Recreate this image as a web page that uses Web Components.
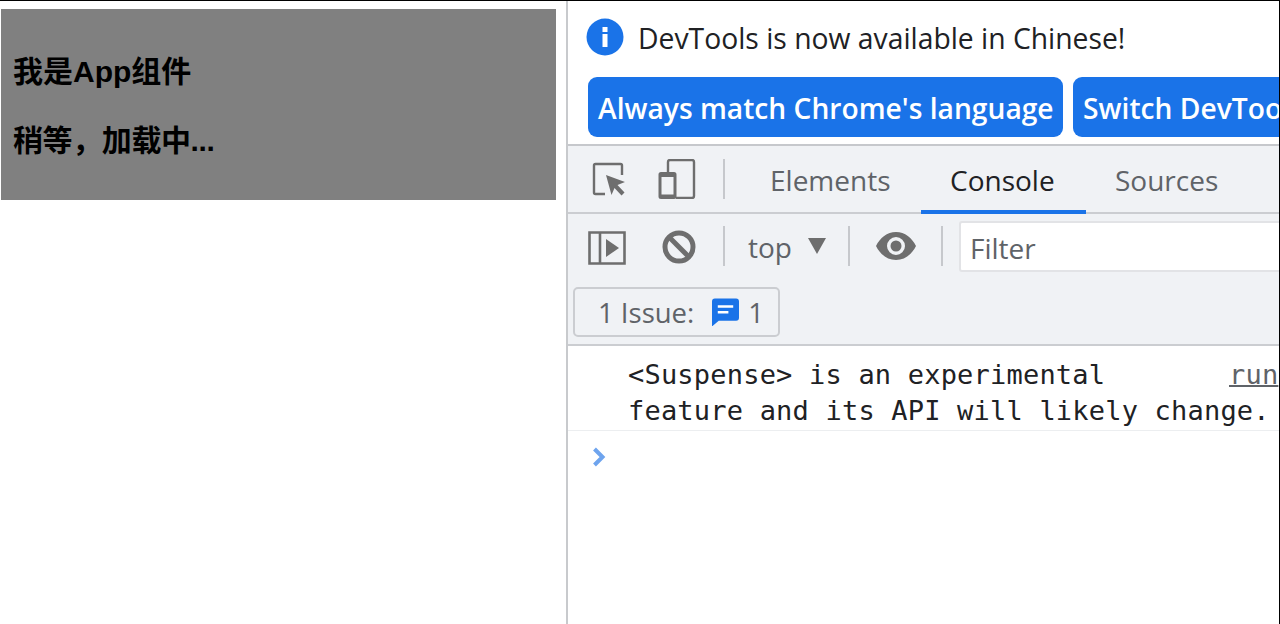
<!DOCTYPE html>
<html lang="zh"><head><meta charset="utf-8"><title>App</title>
<style>
html,body{margin:0;padding:0;height:100%;background:#fff;overflow:hidden}
body{font-family:"Open Sans","Noto Sans",sans-serif}
</style></head><body>
<app-window>
  <demo-panel slot="left">
    <h3>我是App组件</h3>
    <h3 style="letter-spacing:-.4px">稍等，加载中...</h3>
  </demo-panel>
  <dev-tools slot="right"></dev-tools>
</app-window>
<script>
function def(name, html){
  customElements.define(name, class extends HTMLElement{
    constructor(){super();const r=this.attachShadow({mode:'open'});r.innerHTML=html;}
  });
}
def('app-window',`<style>
:host{display:flex;box-sizing:border-box;width:1280px;height:624px;border-top:1px solid #000;border-right:1px solid #000;background:#fff;overflow:hidden}
.l{flex:0 0 568px;box-sizing:border-box;border-right:2px solid #c8cacd}
.r{flex:1;min-width:0;overflow:hidden}
</style><div class="l"><slot name="left"></slot></div><div class="r"><slot name="right"></slot></div>`);

def('demo-panel',`<style>
:host{display:block;box-sizing:border-box;margin:8px 0 0 1px;width:555px;height:191px;background:#808080;padding:45px 12px 0;color:#000;font:700 30px/36px "Liberation Sans","Noto Sans CJK SC",sans-serif}
::slotted(h3){margin:0 0 33px;font:inherit;white-space:nowrap}
</style><slot></slot>`);

def('dev-tools',`<style>
:host{display:block;font-family:"Open Sans","Noto Sans",sans-serif;color:#202124}
.info{box-sizing:border-box;padding:17px 0 0 18px;background:#fff;border-bottom:2px solid #c6c8cc;height:145px;overflow:hidden}
.msg{display:flex;align-items:center;gap:14px;height:38px;font-size:28.3px;line-height:40px;white-space:nowrap}
.msg span{padding-top:2px}
.btns{display:flex;gap:10px;margin-top:21px;padding-left:2px;white-space:nowrap}
.btn{box-sizing:border-box;height:60px;border-radius:9px;background:#1a73e8;color:#fff;font-weight:600;font-size:28.2px;line-height:62px;padding:0 9.500px 0 10px;flex:none}
.tabs{display:flex;align-items:stretch;height:68px;box-sizing:border-box;background:#f0f2f5;border-bottom:2px solid #cbcdd1;white-space:nowrap}
.ticons{display:flex;align-items:center;padding-left:24px;height:66px}
.sep{flex:none;width:2px;height:40px;background:#c6c8cc}
.tab{font-size:28px;color:#5f6368;line-height:68px;height:66px;box-sizing:border-box;flex:none}
.tab.el{margin-left:45px;width:151px}
.tab.on{color:#202124;position:relative;width:165px;padding-left:29px}
.tab.on::after{content:"";position:absolute;left:0;right:0;bottom:-2px;height:4px;background:#1a73e8}
.tab.so{margin-left:29px}
.bar{display:flex;align-items:center;height:64px;background:#f0f2f5;white-space:nowrap}
.top{font-size:28px;color:#5f6368;margin-left:23px;width:60px;margin-top:1px}
.filter{flex:1;box-sizing:border-box;height:51px;margin-left:16px;background:#fff;border:2px solid #e2e3e6;border-right:0;font-size:28px;color:#5f6368;padding-left:9px;line-height:51px;border-radius:3px 0 0 3px}
.issues{height:68px;background:#f0f2f5;box-sizing:border-box;padding:9px 0 0 5px;border-bottom:2px solid #cbcdd1}
.chip{display:inline-flex;align-items:center;box-sizing:border-box;width:207px;height:50px;border:2px solid #cbcdd1;border-radius:5px;padding-left:23px;font-size:27.500px;color:#5f6368;white-space:nowrap}
.log{position:relative;box-sizing:border-box;height:85px;border-bottom:1px solid #eceef0;padding:11px 0 0 60px;font:27px/36px "DejaVu Sans Mono","Liberation Mono",monospace;letter-spacing:.2px;color:#202124;white-space:pre;overflow:hidden}
.src{position:absolute;left:661px;top:11px;color:#5f6368;text-decoration:underline;text-decoration-thickness:2px}
.prompt{padding:16px 0 0 24px;height:40px}
svg{display:block;flex:none}
</style>
<div class="info">
  <div class="msg"><svg width="38" height="38" viewBox="0 0 38 38"><circle cx="19" cy="19" r="18.5" fill="#1a73e8"/><rect x="16.5" y="16" width="5" height="13" fill="#fff"/><rect x="16.5" y="9" width="5" height="5" fill="#fff"/></svg><span>DevTools is now available in Chinese!</span></div>
  <div class="btns"><div class="btn">Always match Chrome's language</div><div class="btn">Switch DevTools to Chinese</div></div>
</div>
<div class="tabs">
  <div class="ticons">
    <svg width="36" height="36" viewBox="0 0 36 36" fill="none"><path d="M13 33H3.500a1.500 1.500 0 0 1-1.500-1.500V4.500A1.500 1.500 0 0 1 3.500 3h25A1.500 1.500 0 0 1 30 4.500V14" stroke="#6e6e6e" stroke-width="2.400"/><path d="M14 14l19 7-7.500 3 7 7.500-3 3-7-7.500-3 7z" fill="#6e6e6e"/></svg>
    <svg style="margin-left:30px" width="38" height="40" viewBox="0 0 38 40" fill="none"><path d="M10 14V3a2 2 0 0 1 2-2h22a2 2 0 0 1 2 2v34a2 2 0 0 1-2 2H18" stroke="#6e6e6e" stroke-width="2.400"/><path fill-rule="evenodd" d="M3 13h13a2.500 2.500 0 0 1 2.500 2.500v22A2.500 2.500 0 0 1 16 40H3a2.500 2.500 0 0 1-2.500-2.500v-22A2.500 2.500 0 0 1 3 13zM3.500 18v17.500h12V18z" fill="#6e6e6e"/></svg>
    <div class="sep" style="margin-left:27px"></div>
  </div>
  <div class="tab el">Elements</div>
  <div class="tab on">Console</div>
  <div class="tab so">Sources</div>
</div>
<div class="bar">
  <svg style="margin-left:20px;margin-top:3px" width="38" height="34" viewBox="0 0 38 34" fill="none"><path d="M1.500 1.500h35v31h-35zM12 1.500v31" stroke="#6e6e6e" stroke-width="2.600"/><path d="M18 8l13 9-13 9z" fill="#6e6e6e"/></svg>
  <svg style="margin-left:36px;margin-top:2px" width="34" height="34" viewBox="0 0 34 34" fill="none"><circle cx="17" cy="17" r="14" stroke="#6e6e6e" stroke-width="5"/><path d="M7 7l20 20" stroke="#6e6e6e" stroke-width="5"/></svg>
  <div class="sep" style="margin-left:27px"></div>
  <span class="top">top</span>
  <svg width="18" height="16" viewBox="0 0 18 16"><path d="M0 0h18L9 16z" fill="#6e6e6e"/></svg>
  <div class="sep" style="margin-left:22px"></div>
  <svg style="margin-left:26px" width="40" height="28" viewBox="0 0 40 28"><path fill-rule="evenodd" d="M20 0C11 0 4 6 0 14c4 8 11 14 20 14s16-6 20-14C36 6 29 0 20 0zm0 23a9 9 0 1 1 0-18 9 9 0 0 1 0 18z" fill="#6e6e6e"/><circle cx="20" cy="14" r="5.500" fill="#6e6e6e"/></svg>
  <div class="sep" style="margin-left:25px"></div>
  <div class="filter">Filter</div>
</div>
<div class="issues"><div class="chip"><span>1 Issue:</span><svg style="margin-left:18px" width="27" height="28" viewBox="0 0 28 28"><path d="M3 0h22a3 3 0 0 1 3 3v17a3 3 0 0 1-3 3H7l-7 6V3a3 3 0 0 1 3-3z" fill="#1a73e8"/><path d="M6 7h16v2.500H6zM6 13h11v2.500H6z" fill="#fff"/></svg><span style="margin-left:9px">1</span></div></div>
<div class="log"><span>&lt;Suspense&gt; is an experimental</span>
feature and its API will likely change.<span class="src">run</span></div>
<div class="prompt"><svg width="14" height="20" viewBox="0 0 14 20" fill="none"><path d="M2.500 2l8 8-8 8" stroke="#6ea4ee" stroke-width="4"/></svg></div>
`);
</script>
</body></html>
